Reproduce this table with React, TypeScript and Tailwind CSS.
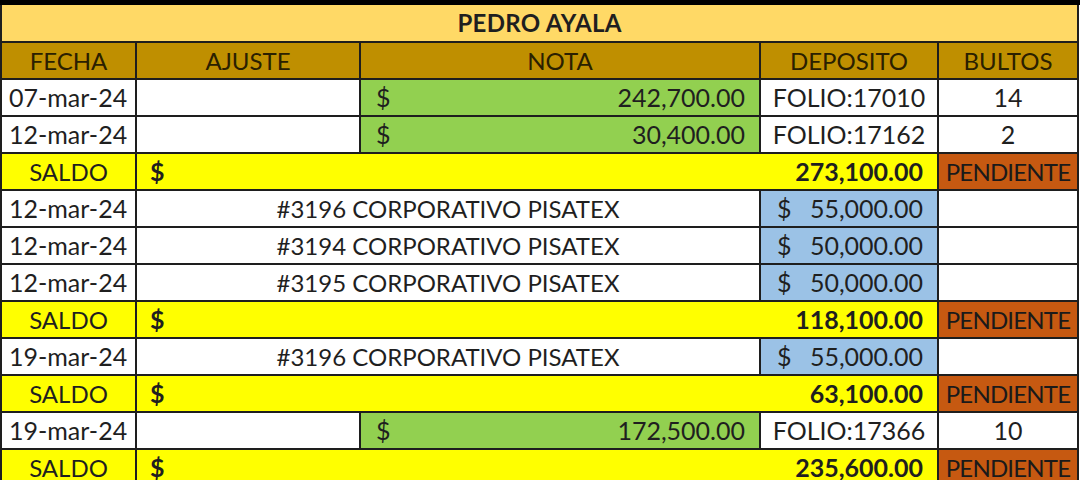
const cell = "border-2 border-[#1e1e1e] h-[37px] p-0 leading-none";

type Row =
  | { kind: "nota"; fecha: string; monto: string; folio: string; bultos: string }
  | { kind: "dep"; fecha: string; concepto: string; monto: string }
  | { kind: "saldo"; monto: string };

const rows: Row[] = [
  { kind: "nota", fecha: "07-mar-24", monto: "242,700.00", folio: "FOLIO:17010", bultos: "14" },
  { kind: "nota", fecha: "12-mar-24", monto: "30,400.00", folio: "FOLIO:17162", bultos: "2" },
  { kind: "saldo", monto: "273,100.00" },
  { kind: "dep", fecha: "12-mar-24", concepto: "#3196 CORPORATIVO PISATEX", monto: "55,000.00" },
  { kind: "dep", fecha: "12-mar-24", concepto: "#3194 CORPORATIVO PISATEX", monto: "50,000.00" },
  { kind: "dep", fecha: "12-mar-24", concepto: "#3195 CORPORATIVO PISATEX", monto: "50,000.00" },
  { kind: "saldo", monto: "118,100.00" },
  { kind: "dep", fecha: "19-mar-24", concepto: "#3196 CORPORATIVO PISATEX", monto: "55,000.00" },
  { kind: "saldo", monto: "63,100.00" },
  { kind: "nota", fecha: "19-mar-24", monto: "172,500.00", folio: "FOLIO:17366", bultos: "10" },
  { kind: "saldo", monto: "235,600.00" },
];

function Fecha({ children }: { children: string }) {
  return <td className={`${cell} bg-white pl-[7px] text-left`}>{children}</td>;
}

export default function App() {
  return (
    <div className="w-[1080px] h-[480px] overflow-hidden bg-white text-[#1f1f1f] text-[25px]" style={{ fontFamily: "Lato, 'Open Sans', sans-serif" }}>
      <div className="h-[5px] bg-black" />
      <table className="w-[1077px] table-fixed border-collapse">
        <colgroup>
          <col className="w-[135px]" />
          <col className="w-[224px]" />
          <col className="w-[400px]" />
          <col className="w-[178px]" />
          <col className="w-[140px]" />
        </colgroup>
        <tbody>
          <tr>
            <td colSpan={5} className={`${cell} border-t-0 bg-[#ffd966] text-center font-bold text-[24px] tracking-[0.3px]`}>
              PEDRO AYALA
            </td>
          </tr>
          <tr className="bg-[#bf8f00] text-[#2a2000] text-center text-[24px]">
            <td className={cell}>FECHA</td>
            <td className={cell}>AJUSTE</td>
            <td className={cell}>NOTA</td>
            <td className={cell}>DEPOSITO</td>
            <td className={cell}>BULTOS</td>
          </tr>
          {rows.map((r, i) => {
            if (r.kind === "saldo") {
              return (
                <tr key={i}>
                  <td className={`${cell} bg-[#ffff00] text-center text-[24px]`}>SALDO</td>
                  <td colSpan={3} className={`${cell} bg-[#ffff00] font-bold`}>
                    <div className="flex justify-between pl-[13px] pr-[14px]">
                      <span>$</span>
                      <span>{r.monto}</span>
                    </div>
                  </td>
                  <td className={`${cell} bg-[#c65911] text-center text-[24px] tracking-[-0.8px] text-[#1a1a1a] whitespace-nowrap`}>PENDIENTE</td>
                </tr>
              );
            }
            if (r.kind === "dep") {
              return (
                <tr key={i}>
                  <Fecha>{r.fecha}</Fecha>
                  <td colSpan={2} className={`${cell} bg-white text-center text-[24px]`}>{r.concepto}</td>
                  <td className={`${cell} bg-[#9bc2e6]`}>
                    <div className="flex justify-between pl-[16px] pr-[14px]">
                      <span>$</span>
                      <span>{r.monto}</span>
                    </div>
                  </td>
                  <td className={`${cell} bg-white`} />
                </tr>
              );
            }
            return (
              <tr key={i}>
                <Fecha>{r.fecha}</Fecha>
                <td className={`${cell} bg-white`} />
                <td className={`${cell} bg-[#92d050]`}>
                  <div className="flex justify-between pl-[15px] pr-[14px]">
                    <span>$</span>
                    <span>{r.monto}</span>
                  </div>
                </td>
                <td className={`${cell} bg-white text-center`}>{r.folio}</td>
                <td className={`${cell} bg-white text-center`}>{r.bultos}</td>
              </tr>
            );
          })}
        </tbody>
      </table>
    </div>
  );
}
